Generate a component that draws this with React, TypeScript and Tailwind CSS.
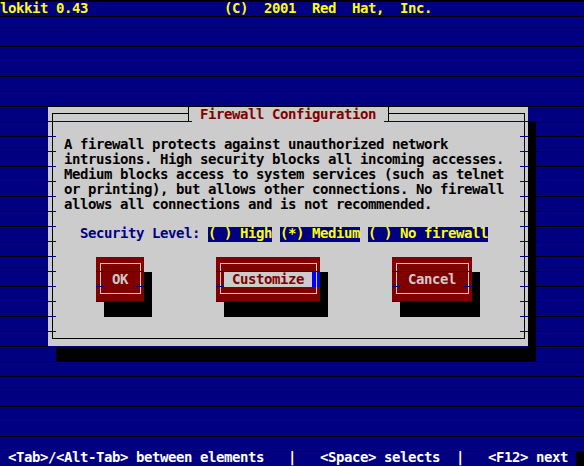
import React from "react";

const FONT =
  "font-['DejaVu_Sans_Mono','Liberation_Mono',monospace] font-bold text-[14px] tracking-[-0.43px]";

function Edge() {
  return <div className="relative z-10 w-[8px] h-[15px] border-b border-[#000080]" />;
}

function Row({ children }: { children?: React.ReactNode }) {
  return (
    <div className="h-[15px] flex">
      <Edge />
      <div className="w-[464px] h-[15px]">{children}</div>
      <Edge />
    </div>
  );
}

function Btn({
  label,
  width,
  focused,
}: {
  label: string;
  width: string;
  focused?: boolean;
}) {
  return (
    <div className={`relative h-[45px] bg-[#800000] shadow-[8px_15px_0_0_#000] flex flex-col ${width}`}>
      <div className="absolute top-[6px] left-[4px] right-[3px] bottom-[8px] border border-[#cccccc]" />
      <div className="relative z-10 h-[15px] border-b border-[#000080]" />
      <div className="relative z-10 h-[15px] flex">
        <div className="w-[8px] h-[15px] border-b border-[#000080]" />
        <div
          className={`flex-1 h-[15px] text-center whitespace-pre leading-[15px] ${
            focused ? "bg-[#cccccc] text-[#800000]" : "text-[#cccccc]"
          }`}
        >
          {label}
        </div>
        {focused ? (
          <div className="relative w-[8px] h-[15px] bg-[#0000ff]">
            <div className="absolute left-[4px] top-0 bottom-0 w-px bg-[#cccccc]" />
          </div>
        ) : (
          <div className="w-[8px] h-[15px] border-b border-[#000080]" />
        )}
      </div>
      <div className="relative z-10 h-[15px] border-b border-[#000080]" />
    </div>
  );
}

function Dialog() {
  const para = [
    "A firewall protects against unauthorized network",
    "intrusions. High security blocks all incoming accesses.",
    "Medium blocks access to system services (such as telnet",
    "or printing), but allows other connections. No firewall",
    "allows all connections and is not recommended.",
  ];
  return (
    <div className="relative w-[480px] h-[240px] bg-[#cccccc] shadow-[8px_15px_0_0_#000] flex flex-col">
      <div className="absolute top-[6px] left-[4px] right-[3px] bottom-[8px] border border-black" />
      <div className="h-[15px] flex">
        <div className="relative z-10 w-[136px] h-[15px] border-b border-[#000080]" />
        <div className="relative z-10 w-[8px] h-[15px] bg-[#cccccc] border-b border-[#000080]">
          <div className="absolute left-[4px] top-0 bottom-0 w-px bg-black" />
          <div className="absolute left-0 top-[6px] w-[5px] h-px bg-black" />
        </div>
        <div className="relative z-10 w-[192px] h-[15px] bg-[#cccccc] text-[#800000] whitespace-pre leading-[15px]">
          {" Firewall Configuration "}
        </div>
        <div className="relative z-10 w-[8px] h-[15px] bg-[#cccccc] border-b border-[#000080]">
          <div className="absolute left-[4px] top-0 bottom-0 w-px bg-black" />
          <div className="absolute left-[4px] right-0 top-[6px] h-px bg-black" />
        </div>
        <div className="relative z-10 w-[136px] h-[15px] border-b border-[#000080]" />
      </div>
      <Row />
      {para.map((t) => (
        <Row key={t}>
          <div className="pl-[8px] whitespace-pre leading-[15px] text-black">{t}</div>
        </Row>
      ))}
      <Row />
      <Row>
        <div className="pl-[24px] flex h-[15px] whitespace-pre leading-[13px]">
          <span className="text-[#000080]">Security Level:</span>
          <span className="w-[8px]" />
          <span className="h-[15px] bg-[#000080] text-[#ffff00]">( ) High</span>
          <span className="w-[8px]" />
          <span className="h-[15px] bg-[#000080] text-[#ffff00]">(*) Medium</span>
          <span className="w-[8px]" />
          <span className="h-[15px] bg-[#000080] text-[#ffff00]">( ) No firewall</span>
        </div>
      </Row>
      <Row />
      <div className="h-[45px] flex">
        <div className="flex flex-col">
          <Edge />
          <Edge />
          <Edge />
        </div>
        <div className="w-[464px] h-[45px] flex gap-[72px] pl-[40px]">
          <Btn label=" OK " width="w-[48px]" />
          <Btn label=" Customize " width="w-[104px]" focused />
          <Btn label=" Cancel " width="w-[80px]" />
        </div>
        <div className="flex flex-col">
          <Edge />
          <Edge />
          <Edge />
        </div>
      </div>
      <Row />
      <Row />
      <div className="relative z-10 h-[15px] border-b border-[#000080]" />
    </div>
  );
}

export default function App() {
  const help =
    " <Tab>/<Alt-Tab> between elements   |   <Space> selects  |   <F12> next ";
  return (
    <div className={`w-[584px] h-[466px] overflow-hidden bg-black pt-[2px] ${FONT}`}>
      <div className="h-[465px] flex flex-col bg-[repeating-linear-gradient(to_bottom,#000080_0px,#000080_14px,#000000_14px,#000000_15px)]">
        <div className="h-[15px] leading-[12px] text-[#ffff00] whitespace-pre">
          {"lokkit 0.43" + " ".repeat(17) + "(C)  2001  Red  Hat,  Inc."}
        </div>
        <div className="mt-[90px] ml-[48px]">
          <Dialog />
        </div>
        <div className="mt-auto h-[15px] flex">
          <div className="w-[576px] h-[15px] bg-[#000080] text-white leading-[11px] whitespace-pre">
            {help}
          </div>
          <div className="w-[8px] h-[15px] bg-black" />
        </div>
      </div>
    </div>
  );
}
